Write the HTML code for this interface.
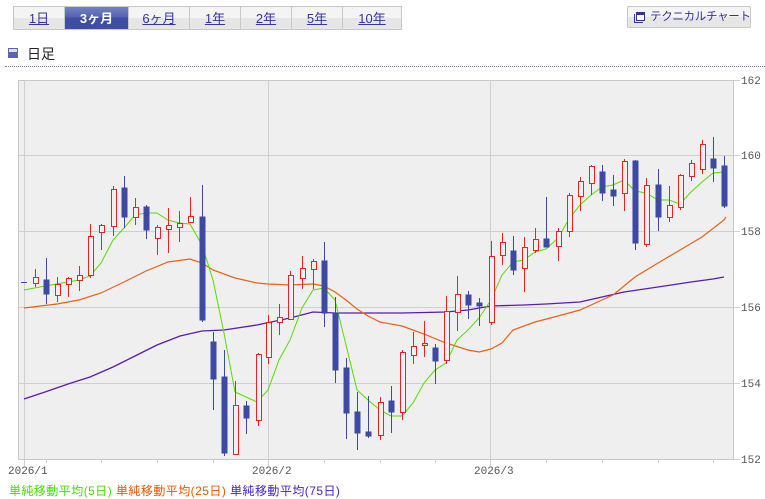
<!DOCTYPE html>
<html><head><meta charset="utf-8"><style>
body{margin:0;width:765px;height:499px;background:#fff;font-family:"Liberation Sans","Noto Sans CJK JP",sans-serif;position:relative;overflow:hidden}
.tabs{position:absolute;left:13px;top:6px;height:24px;display:flex;border:1px solid #c8c8c8;box-sizing:border-box}
.tabs a{display:block;height:22px;line-height:23px;text-align:center;font-size:13px;color:#3333aa;text-decoration:underline;background:linear-gradient(#f4f4f4 50%,#e6e6e6 50%);border-right:1px solid #c8c8c8;box-sizing:border-box}
.tabs a.on{background:linear-gradient(#7482c4,#5464b4 45%,#3f4ea0 50%,#3f4ea0);color:#fff;font-weight:bold;text-decoration:none}
.btn{position:absolute;left:627px;top:6px;width:124px;height:22px;border:1px solid #c8c8c8;box-sizing:border-box;background:linear-gradient(#f4f4f4 50%,#e6e6e6 50%);font-size:11.5px;letter-spacing:-0.3px;color:#333399;line-height:20px;padding-left:22px;border-radius:2px;white-space:nowrap;overflow:hidden}
.btn i{position:absolute;left:8px;top:5px;width:9px;height:9px;border:1px solid #333399;border-top-width:3px;box-sizing:border-box;background:#fff}
.btn b{position:absolute;left:6px;top:7px;width:9px;height:9px;border-left:1px solid #333399;border-bottom:1px solid #333399;box-sizing:border-box}
.hd{position:absolute;left:27px;top:44px;font-size:14px;color:#222}
.sq{position:absolute;left:8px;top:48px;width:10px;height:10px;border:1px solid #5a64a8;box-sizing:border-box;background:linear-gradient(#dde 40%,#5a64a8 40%)}
.dot{position:absolute;left:5px;right:0;top:66px;border-top:1px dotted #7777aa}
.leg{position:absolute;left:9px;top:482px;font-size:12px;white-space:nowrap;letter-spacing:0.45px}
</style></head><body>
<div class="tabs"><a style="width:51px">1日</a><a class="on" style="width:64px">3ヶ月</a><a style="width:61px">6ヶ月</a><a style="width:51px">1年</a><a style="width:51px">2年</a><a style="width:51px">5年</a><a style="width:58px;border-right:0">10年</a></div>
<div class="btn"><b></b><i></i>テクニカルチャート</div>
<div class="sq"></div><div class="hd">日足</div>
<div class="dot"></div>
<svg width="765" height="499" style="position:absolute;left:0;top:0" font-family="Liberation Mono,monospace" font-size="11" fill="#555">
<rect x="18.5" y="80.5" width="715" height="379" fill="#efefef" stroke="#c8c8c8"/>
<g stroke="#cfcfcf">
<line x1="18" y1="155.5" x2="740" y2="155.5"/><line x1="18" y1="231.5" x2="740" y2="231.5"/><line x1="18" y1="307.5" x2="740" y2="307.5"/><line x1="18" y1="383.5" x2="740" y2="383.5"/>
<line x1="733" y1="80.5" x2="740" y2="80.5"/><line x1="733" y1="459.5" x2="740" y2="459.5"/>
<line x1="24.5" y1="80" x2="24.5" y2="466"/><line x1="268.5" y1="80" x2="268.5" y2="466"/><line x1="490.5" y1="80" x2="490.5" y2="466"/>
<path d="M46.5 459v4M101.5 459v4M157.5 459v4M213.5 459v4M324.5 459v4M380.5 459v4M435.5 459v4M546.5 459v4M602.5 459v4M658.5 459v4M713.5 459v4"/>
</g>
<text x="741" y="84">162</text><text x="741" y="159">160</text><text x="741" y="235">158</text><text x="741" y="311">156</text><text x="741" y="387">154</text><text x="741" y="463">152</text>
<text x="8" y="474">2026/1</text><text x="252" y="474">2026/2</text><text x="474" y="474">2026/3</text>
<polyline fill="none" stroke="#5a1ab8" stroke-width="1.3" points="24,399 45,392 68,384 90,377 113,367 135,356 157,345 180,336 202,331 224,330 257,325 290,318 313,312 335,313 357,313 402,313 446,312 468,310 491,306 524,305 546,304 580,302 602,297 624,292 658,287 691,282 713,279 724,277"/>
<polyline fill="none" stroke="#ee6010" stroke-width="1.2" points="24,308 57,304 79,300 101,293 124,282 146,271 168,262 190,259 202,263 213,270 235,278 257,283 268,284 290,285 313,284 324,286 335,292 346,300 357,309 368,316 380,322 402,326 424,334 446,343 468,350 479,352 491,349 502,343 513,330 535,322 558,316 580,310 602,300 613,295 635,277 658,263 680,250 702,237 724,220 726,217"/>
<polyline fill="none" stroke="#55dd00" stroke-width="1" points="24,290 45,286 68,282 79,280 90,276 101,263 113,240 124,228 135,215 146,213 157,213 168,220 179,223 190,224 202,245 213,280 224,333 235,392 246,397 257,402 268,390 279,360 290,340 302,308 313,290 324,288 335,300 346,345 357,390 368,400 380,410 391,416 402,416 413,403 424,383 435,370 446,363 457,340 468,330 479,318 491,300 502,275 513,262 524,260 535,252 546,249 558,238 569,219 580,205 591,195 602,187 613,185 624,180 635,191 646,193 658,200 669,200 680,204 691,192 702,182 713,173 724,172"/>
<g stroke="#3d4aa3" fill="#3d4aa3">
<path d="M21 282.5h6M46.5 258v46M124.5 176v52M146.5 205v34M202.5 185v137M213.5 332v78M224.5 350v106M246.5 401v33M324.5 242v85M335.5 297v86M346.5 358v81M357.5 392v58M368.5 396v42M391.5 386v47M435.5 344v40M468.5 291v28M479.5 298v28M513.5 236v39M546.5 197v50M602.5 165v36M613.5 175v31M635.5 160v90M658.5 169v62M713.5 137v45M724.5 156v52"/>
<rect x="44" y="280" width="5" height="14"/><rect x="122" y="188" width="5" height="29"/><rect x="144" y="207" width="5" height="23"/><rect x="200" y="217" width="5" height="103"/><rect x="211" y="342" width="5" height="37"/><rect x="222" y="377" width="5" height="76"/><rect x="244" y="406" width="5" height="12"/><rect x="322" y="261" width="5" height="52"/><rect x="333" y="313" width="5" height="57"/><rect x="344" y="368" width="5" height="45"/><rect x="355" y="412" width="5" height="21"/><rect x="366" y="432" width="5" height="4"/><rect x="389" y="401" width="5" height="11"/><rect x="433" y="348" width="5" height="13"/><rect x="466" y="295" width="5" height="10"/><rect x="477" y="303" width="5" height="3"/><rect x="511" y="251" width="5" height="19"/><rect x="544" y="239" width="5" height="8"/><rect x="600" y="172" width="5" height="21"/><rect x="611" y="190" width="5" height="6"/><rect x="633" y="161" width="5" height="82"/><rect x="656" y="185" width="5" height="32"/><rect x="711" y="159" width="5" height="9"/><rect x="722" y="166" width="5" height="40"/>
</g>
<g stroke="#ee2222" fill="none">
<path d="M35.5 269v18M57.5 277v25M68.5 277v20M79.5 266v25M90.5 224v54M101.5 224v26M113.5 186v50M135.5 198v27M157.5 225v30M168.5 208v45M179.5 211v31M190.5 197v25M235.5 381v73M258.5 353v73M268.5 315v49M279.5 304v31M290.5 271v48M302.5 256v33M313.5 259v30M380.5 397v43M402.5 350v70M413.5 332v32M424.5 321v36M446.5 296v68M457.5 276v55M491.5 241v84M502.5 233v32M524.5 237v55M535.5 228v25M558.5 228v33M569.5 193v44M580.5 177v34M591.5 165v30M624.5 159v52M646.5 178v69M669.5 186v36M680.5 174v36M691.5 160v21M702.5 140v34"/>
<g fill="#efefef"><rect x="33.5" y="277.5" width="5" height="6"/><rect x="55.5" y="284.5" width="5" height="11"/><rect x="66.5" y="278.5" width="5" height="6"/><rect x="77.5" y="275.5" width="5" height="5"/><rect x="88.5" y="236.5" width="5" height="39"/><rect x="99.5" y="225.5" width="5" height="7"/><rect x="111.5" y="189.5" width="5" height="37"/><rect x="133.5" y="207.5" width="5" height="10"/><rect x="155.5" y="227.5" width="5" height="11"/><rect x="166.5" y="225.5" width="5" height="4"/><rect x="177.5" y="223.5" width="5" height="4"/><rect x="188.5" y="216.5" width="5" height="6"/><rect x="233.5" y="405.5" width="5" height="49"/><rect x="256.5" y="354.5" width="5" height="66"/><rect x="266.5" y="322.5" width="5" height="35"/><rect x="277.5" y="317.5" width="5" height="5"/><rect x="288.5" y="275.5" width="5" height="44"/><rect x="300.5" y="268.5" width="5" height="10"/><rect x="311.5" y="261.5" width="5" height="8"/><rect x="378.5" y="402.5" width="5" height="33"/><rect x="400.5" y="352.5" width="5" height="60"/><rect x="411.5" y="346.5" width="5" height="9"/><rect x="422.5" y="343.5" width="5" height="2"/><rect x="444.5" y="311.5" width="5" height="49"/><rect x="455.5" y="294.5" width="5" height="18"/><rect x="489.5" y="256.5" width="5" height="66"/><rect x="500.5" y="242.5" width="5" height="13"/><rect x="522.5" y="247.5" width="5" height="21"/><rect x="533.5" y="239.5" width="5" height="11"/><rect x="556.5" y="231.5" width="5" height="15"/><rect x="567.5" y="195.5" width="5" height="36"/><rect x="578.5" y="181.5" width="5" height="15"/><rect x="589.5" y="166.5" width="5" height="17"/><rect x="622.5" y="161.5" width="5" height="32"/><rect x="644.5" y="185.5" width="5" height="59"/><rect x="667.5" y="205.5" width="5" height="12"/><rect x="678.5" y="175.5" width="5" height="32"/><rect x="689.5" y="163.5" width="5" height="13"/><rect x="700.5" y="144.5" width="5" height="25"/></g>
</g>
</svg>
<div class="leg"><span style="color:#44dd00">単純移動平均(5日)</span> <span style="color:#ee5500">単純移動平均(25日)</span> <span style="color:#4422cc">単純移動平均(75日)</span></div>
</body></html>
